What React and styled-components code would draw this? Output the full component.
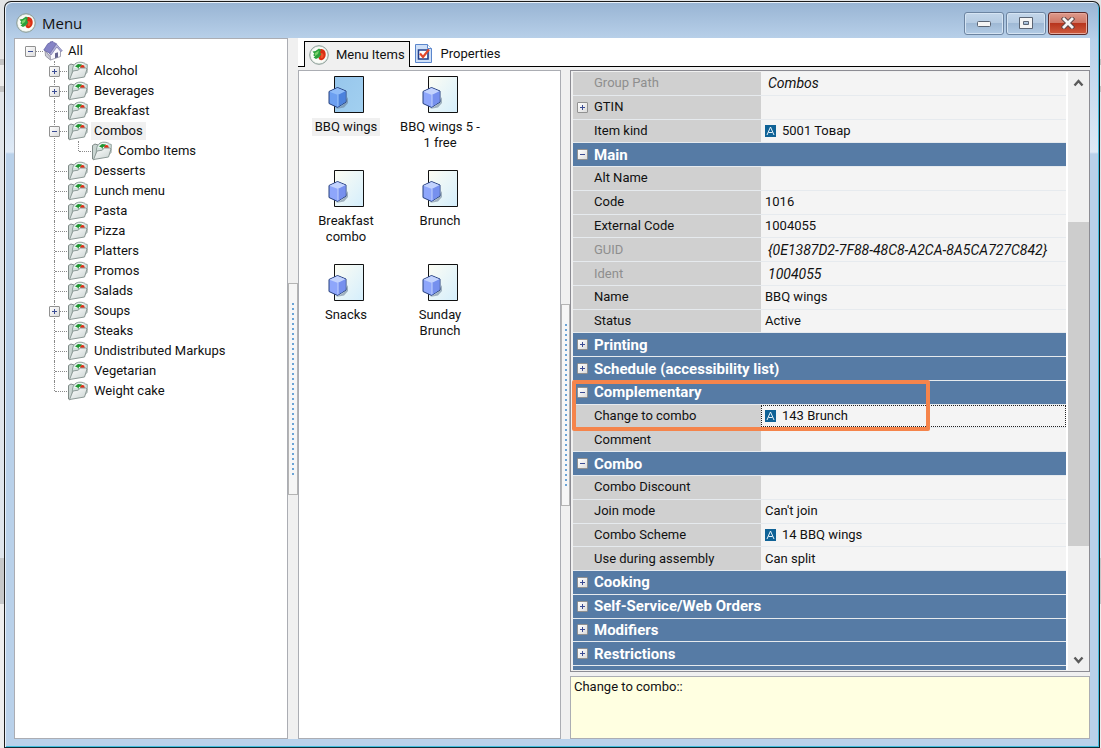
import React from 'react';
import styled, { createGlobalStyle } from 'styled-components';

const Global = createGlobalStyle`
  * { box-sizing: border-box; }
  body { margin: 0; background: #f0f0f0; font: 13px/20px Roboto, "Liberation Sans", sans-serif; color: #111; }
  button { font: inherit; color: inherit; }
`;

const Desktop = styled.div`
  min-height: 100vh;
  display: flex;
  padding: 1px 1px 0 4px;
  background: linear-gradient(
    #e2e4e6 0, #e6e6e6 59px, #c4c4c4 59px, #c4c4c4 65px, #ececec 65px, #ececec 86px,
    #c4c4c4 86px, #c4c4c4 92px, #e2e6ea 92px, #dfe5ec 558px, #c6c8ca 558px, #c6c8ca 604px, #eeeeee 604px
  );
`;
const Window = styled.main`
  flex: 1;
  display: flex;
  flex-direction: column;
  min-width: 0;
  padding: 0 9px 8px;
  border: 1px solid #1c1c1c;
  border-bottom-color: #0b2d38;
  border-radius: 7px 7px 0 0;
  background: linear-gradient(#98b4d3 0, #b9d1ea 38px, #dfeaf6 150px, #b9d1ea 152px, #b9d1ea 100%);
  box-shadow: inset 1px 1px 0 #e9f1fa, inset -1px -1px 0 #43bcdc;
`;
const TitleBar = styled.header`
  display: flex;
  align-items: center;
  gap: 6px;
  height: 36px;
  padding: 6px 2px 0 2px;
`;
const Title = styled.h1`
  flex: 1;
  margin: 0;
  font: 15px/20px "Open Sans", "Noto Sans", sans-serif;
`;
const Controls = styled.div`
  display: flex;
  gap: 2px;
`;
const Control = styled.button`
  width: 40px;
  height: 23px;
  padding: 0;
  display: grid;
  place-items: center;
  border: 1px solid ${(p) => (p.$close ? '#5c2a2a' : '#6c84a1')};
  border-radius: 3px;
  box-shadow: inset 0 0 0 1px ${(p) => (p.$close ? '#e8a99c' : '#d5e4f3')};
  background: ${(p) =>
    p.$close
      ? 'linear-gradient(#dd9a8c 0, #cf7462 50%, #b8351d 50%, #cf5c40 100%)'
      : 'linear-gradient(#c3d6ea 0, #b5cbe2 50%, #9fb9d5 50%, #b2cbe5 100%)'};
`;
const Body = styled.div`
  flex: 1;
  display: grid;
  grid-template-columns: 274px 10px minmax(0, 1fr);
  background: #f0f0f0;
`;
const Panel = styled.section`
  min-width: 0;
  background: #fff;
  border: 1px solid #abadb3;
`;
const Splitter = styled.div`
  display: flex;
  flex-direction: column;
  justify-content: center;
  background: #f0f0f0;
`;
const Grip = styled.div`
  height: ${(p) => p.$h}px;
  display: flex;
  justify-content: center;
  padding: 19px 0;
  border: 1px solid #b4b4b4;
  background: #f6f6f6;
  &::after {
    content: '';
    width: 2px;
    background: repeating-linear-gradient(#6aa3d6 0 2px, #f6f6f6 2px 5px);
  }
`;

const Tree = styled.ul`
  list-style: none;
  margin: 0;
  padding: 2px 0 0 10px;
`;
const Branch = styled.ul`
  list-style: none;
  margin: 0;
  padding: 0 0 0 24px;
`;
const Node = styled.li`
  position: relative;
  &::before {
    content: '';
    position: absolute;
    left: 5px;
    top: 0;
    bottom: 0;
    border-left: 1px dotted #8a8a8a;
  }
  &:last-child::before {
    bottom: auto;
    height: ${(p) => (p.$root ? 0 : 10)}px;
  }
`;
const NodeRow = styled.div`
  display: flex;
  align-items: center;
  height: 20px;
`;
const Joint = styled.span`
  position: relative;
  width: 18px;
  height: 20px;
  display: flex;
  align-items: center;
  &::before {
    content: '';
    position: absolute;
    left: 6px;
    right: 0;
    top: 10px;
    border-top: 1px dotted #8a8a8a;
  }
`;
const Toggle = styled.button`
  position: relative;
  flex: none;
  width: 11px;
  height: 11px;
  padding: 0;
  border: 1px solid #919191;
  border-radius: 1px;
  background: linear-gradient(135deg, #fff, #dcdcdc);
  &::before {
    content: '';
    position: absolute;
    inset: 4px 2px auto;
    border-top: 1px solid #3b4c94;
  }
  &::after {
    content: '';
    display: ${(p) => (p.$open ? 'none' : 'block')};
    position: absolute;
    inset: 2px auto 2px 4px;
    border-left: 1px solid #3b4c94;
  }
`;
const NodeLabel = styled.span`
  margin-left: 2px;
  padding: 0 3px;
  line-height: 18px;
  background: ${(p) => (p.$sel ? '#f0f0f0' : 'transparent')};
`;

const Right = styled.div`
  display: flex;
  flex-direction: column;
  min-width: 0;
`;
const Tabs = styled.nav`
  display: flex;
  align-items: flex-end;
  height: 29px;
  padding-left: 6px;
  background: #fff;
  border-bottom: 1px solid #000;
`;
const Tab = styled.button`
  display: flex;
  align-items: center;
  gap: ${(p) => (p.$active ? 7 : 9)}px;
  height: 26px;
  padding: 0 4px;
  border: 1px solid ${(p) => (p.$active ? '#000' : 'transparent')};
  border-bottom: 0;
  background: ${(p) => (p.$active ? '#f0f0f0' : 'transparent')};
  margin-bottom: ${(p) => (p.$active ? -1 : 0)}px;
`;
const Panes = styled.div`
  flex: 1;
  display: grid;
  grid-template-columns: 263px 9px minmax(0, 1fr);
  padding-top: 3px;
`;
const Tiles = styled.div`
  display: grid;
  grid-template-columns: repeat(2, 94px);
  grid-auto-rows: 94px;
`;
const Tile = styled.button`
  display: flex;
  flex-direction: column;
  align-items: center;
  gap: 4px;
  padding: 5px 0 0;
  border: 0;
  background: none;
  line-height: 16px;
`;
const TileLabel = styled.span`
  max-width: 88px;
  padding: 1px 3px;
  background: ${(p) => (p.$sel ? '#f0f0f0' : 'transparent')};
`;
const Side = styled.div`
  display: flex;
  flex-direction: column;
  gap: 4px;
  min-width: 0;
`;
const GridBox = styled.section`
  flex: 1;
  display: flex;
  min-width: 0;
  border: 1px solid #8c8c93;
  padding: 1px 0 1px 2px;
  background: #f0f0f0;
`;
const Table = styled.table`
  flex: 1;
  display: flex;
  min-width: 0;
  border-right: 2px solid #fff;
`;
const Rows = styled.tbody`
  flex: 1;
  display: flex;
  flex-direction: column;
  min-width: 0;
`;
const Row = styled.tr`
  position: relative;
  flex: 1 0 0;
  display: grid;
  grid-template-columns: ${(p) => (p.$head ? '1fr' : '188px minmax(0, 1fr)')};
  border-bottom: 1px solid #e6eaee;
`;
const Name = styled.th`
  display: flex;
  align-items: center;
  gap: 6px;
  padding: 0 0 0 ${(p) => (p.$toggle ? 4 : 21)}px;
  font-size: ${(p) => (p.$head ? 15 : 13)}px;
  font-weight: ${(p) => (p.$head ? 700 : 400)};
  color: ${(p) => (p.$head ? '#fff' : p.$dim ? '#8e8e8e' : '#111')};
  background: ${(p) => (p.$head ? '#567ba5' : '#d0d0d0')};
`;
const Value = styled.td`
  display: flex;
  align-items: center;
  gap: 6px;
  padding: 0 0 0 ${(p) => (p.$dim ? 6 : 3)}px;
  white-space: nowrap;
  font-size: ${(p) => (p.$dim ? 14 : 13)}px;
  font-style: ${(p) => (p.$dim ? 'italic' : 'normal')};
  border: 1px ${(p) => (p.$focus ? 'dotted #222' : 'solid transparent')};
  background: #f4f4f4;
`;
const NextRow = styled.tr`
  height: 4px;
  background: #567ba5;
`;
const Scroll = styled.div`
  width: 21px;
  display: flex;
  flex-direction: column;
`;
const ScrollButton = styled.button`
  height: 21px;
  padding: 0;
  border: 0;
  background: none;
  display: grid;
  place-items: center;
`;
const Track = styled.div`
  flex: 1;
  display: flex;
  flex-direction: column;
  padding: 129px 0 103px;
`;
const Thumb = styled.div`
  flex: 1;
  background: #cdcdcd;
`;
const Highlight = styled.span`
  position: absolute;
  z-index: 1;
  left: -1px;
  top: -1px;
  width: 358px;
  height: calc(200% + 6px);
  border: 4px solid #f5844b;
  border-radius: 2px;
  pointer-events: none;
`;
const Hint = styled.footer`
  height: 63px;
  padding: 0 3px;
  border: 1px solid #abadb3;
  background: #ffffe1;
`;

const AppIcon = () => (
  <svg width="20" height="20" viewBox="0 0 20 20">
    <circle cx="10" cy="10" r="9.300" fill="#e6ece6" stroke="#8a9c96" />
    <circle cx="10" cy="10" r="8" fill="#fafcf8" />
    <path d="M10 5c1-1.500 4-1 5.500.5 2 2.500 1.500 7-1 8.800-2 1.500-4 1-4.800-.8-.5-1.500 1-2 1.500-3.500z" fill="#d92f14" />
    <path d="M12 8c1.500-.5 3 1 2.500 3s-1.500 2.500-2.500 2 .5-2 0-5z" fill="#f0532a" />
    <path d="M3.500 6.500l3-.5 3.500-2.500 2 1.500-1 2 1 2.500-2 3-3 1.500-2.500-1.500 1.500-1-2-1.500 1.500-1z" fill="#2ba03c" />
    <path d="M6 8l4-2.500-1 3.500-3 2z" fill="#7bd26a" />
  </svg>
);
const FolderIcon = () => (
  <svg width="22" height="20" viewBox="0 0 22 20">
    <defs>
      <linearGradient id="flap" x1="0" y1="0" x2="1" y2="1">
        <stop offset="0" stopColor="#ffffff" />
        <stop offset="1" stopColor="#c9d3d1" />
      </linearGradient>
    </defs>
    <path d="M1.500 4.500L4 3l3 1v6l-4 9-1.500-1z" fill="#cbd6d3" stroke="#7f8a87" />
    <path d="M5.500 8C6 3.500 9 1.200 13 1.200c3 0 4.800.8 5.500 1.800l1.800.5-.3 8-3 3H5z" fill="#d3e2de" stroke="#93a29e" />
    <path d="M7 7c.5-3 3-5 6-5s5 2 5 5z" fill="#eef6f3" />
    <path d="M8 5.500L11 3l4 .5-1 2-2 .5-.5 2-1-1.500z" fill="#1f9632" />
    <circle cx="15.500" cy="6.200" r="2.200" fill="#dd2f16" />
    <path d="M2.500 18.500L6 10l5-.8L13.500 7h5.300l1.200 1-2.500 8z" fill="url(#flap)" stroke="#8d9a97" />
  </svg>
);
const HomeIcon = () => (
  <svg width="20" height="20" viewBox="0 0 20 20">
    <path d="M2 9.500L7.500 16v3L2.500 15z" fill="#c9c9d6" stroke="#9a9aa8" />
    <path d="M7.500 19l10-3.500v-6L13 5l-6 7z" fill="#f7f7fc" stroke="#a3a3b4" />
    <path d="M.8 9L5 2.500l2-.3V1l3-.5 1 1.200 2.500 1L7 12.500z" fill="#8583c6" stroke="#6563a5" strokeWidth=".8" />
    <path d="M7 12.500L13.300 3l6 6.800-1.500.7-4-4.500L8 14z" fill="#b4b3dc" stroke="#7473a8" strokeWidth=".7" />
    <path d="M12 17.300v-5l3-1v5z" fill="#65648f" />
  </svg>
);
const PageIcon = () => (
  <svg width="17" height="19" viewBox="0 0 17 19">
    <path d="M.5.5h12l4 4v14H.5z" fill="#cfe0f8" stroke="#5b86cc" />
    <path d="M12.500.5v4h4" fill="#fff" stroke="#5b86cc" />
    <path d="M3.500 6h9.500v9H3.500z" fill="#fff" stroke="#23408c" strokeWidth="1.600" />
    <path d="M5 9.500l3 3.500 6-7.500" fill="none" stroke="#e4482b" strokeWidth="2.200" />
  </svg>
);
const ItemIcon = ({ sel }) => (
  <svg width="36" height="38" viewBox="0 0 36 38">
    <defs>
      <linearGradient id={sel ? 'gs' : 'gn'} x1="0" y1="0" x2="1" y2="1">
        <stop offset="0" stopColor={sel ? '#97c6ec' : '#fdfdf4'} />
        <stop offset="1" stopColor={sel ? '#a2d0f0' : '#d4eefc'} />
      </linearGradient>
    </defs>
    <path d="M6.500.5h29v36h-29z" fill={`url(#${sel ? 'gs' : 'gn'})`} stroke="#111" />
    <path d="M8 33l8-1.500 4-4.500v-6l-5 8z" fill="#64788f" opacity=".55" />
    <path d="M1 15.500l8.500-4 8.500 3.500v11l-8.500 5.500-8.500-4z" fill={sel ? '#6c9ff0' : '#8ea6fb'} stroke="#26407e" />
    <path d="M1.500 15.800l8-3.800 8 3.300-7.500 3.700z" fill={sel ? '#8fbcf8' : '#c3d3fd'} />
    <path d="M10 19l7.500-3.700v10.400L10 30.700z" fill={sel ? '#4c82dd' : '#7690ee'} />
    <path d="M10 19v11" stroke={sel ? '#9cc6fa' : '#c3d3fd'} />
  </svg>
);
const RefIcon = () => (
  <svg width="11" height="12" viewBox="0 0 11 12">
    <path d="M0 0h11v12H0z" fill="#0f6296" />
    <path d="M2 10l3.500-8 3.500 8M3.500 7.500h4" fill="none" stroke="#e8f3fa" />
  </svg>
);
const Chevron = ({ down }) => (
  <svg width="11" height="8" viewBox="0 0 11 8">
    <path d={down ? 'M1.500 1.500l4 4.500 4-4.500' : 'M1.500 6.500l4-4.500 4 4.500'} fill="none" stroke="#5a5a5a" strokeWidth="2.400" />
  </svg>
);

const categories = [
  ['Alcohol', 'closed'], ['Beverages', 'closed'], ['Breakfast'],
  ['Combos', 'open', ['Combo Items']],
  ['Desserts'], ['Lunch menu'], ['Pasta'], ['Pizza'], ['Platters'], ['Promos'],
  ['Salads'], ['Soups', 'closed'], ['Steaks'], ['Undistributed Markups'],
  ['Vegetarian'], ['Weight cake'],
];
const items = ['BBQ wings', 'BBQ wings 5 - 1 free', 'Breakfast combo', 'Brunch', 'Snacks', 'Sunday Brunch'];
const props = [
  { n: 'Group Path', v: 'Combos', dim: true },
  { n: 'GTIN', toggle: true },
  { n: 'Item kind', v: '5001 Товар', link: true },
  { n: 'Main', head: true, open: true },
  { n: 'Alt Name' },
  { n: 'Code', v: '1016' },
  { n: 'External Code', v: '1004055' },
  { n: 'GUID', v: '{0E1387D2-7F88-48C8-A2CA-8A5CA727C842}', dim: true },
  { n: 'Ident', v: '1004055', dim: true },
  { n: 'Name', v: 'BBQ wings' },
  { n: 'Status', v: 'Active' },
  { n: 'Printing', head: true },
  { n: 'Schedule (accessibility list)', head: true },
  { n: 'Complementary', head: true, open: true, marked: true },
  { n: 'Change to combo', v: '143 Brunch', link: true, focus: true },
  { n: 'Comment' },
  { n: 'Combo', head: true, open: true },
  { n: 'Combo Discount' },
  { n: 'Join mode', v: "Can't join" },
  { n: 'Combo Scheme', v: '14 BBQ wings', link: true },
  { n: 'Use during assembly', v: 'Can split' },
  { n: 'Cooking', head: true },
  { n: 'Self-Service/Web Orders', head: true },
  { n: 'Modifiers', head: true },
  { n: 'Restrictions', head: true },
];

function TreeNode({ name, state, children }) {
  return (
    <Node>
      <NodeRow>
        <Joint>{state && <Toggle $open={state === 'open'} aria-label={`Toggle ${name}`} />}</Joint>
        <FolderIcon />
        <NodeLabel $sel={name === 'Combos'}>{name}</NodeLabel>
      </NodeRow>
      {children && (
        <Branch>
          {children.map((c) => <TreeNode key={c} name={c} />)}
        </Branch>
      )}
    </Node>
  );
}

export default function App() {
  return (
    <Desktop>
      <Global />
      <Window>
        <TitleBar>
          <AppIcon />
          <Title>Menu</Title>
          <Controls>
            <Control aria-label="Minimize">
              <svg width="14" height="7" viewBox="0 0 14 7"><rect x=".5" y="1.500" width="13" height="5" rx="1" fill="#f5f5f5" stroke="#5b6574" /></svg>
            </Control>
            <Control aria-label="Maximize">
              <svg width="14" height="12" viewBox="0 0 14 12"><path fillRule="evenodd" d="M.5.5h13v11H.5zM4.500 4.500v3h5v-3z" fill="#f5f5f5" stroke="#5b6574" /></svg>
            </Control>
            <Control $close aria-label="Close">
              <svg width="14" height="12" viewBox="0 0 14 12">
                <path d="M3 2l8 8M11 2l-8 8" fill="none" stroke="#5f4646" strokeWidth="4.600" strokeLinecap="square" />
                <path d="M3 2l8 8M11 2l-8 8" fill="none" stroke="#f5f5f5" strokeWidth="2.800" strokeLinecap="square" />
              </svg>
            </Control>
          </Controls>
        </TitleBar>
        <Body>
          <Panel>
            <Tree>
              <Node $root>
                <NodeRow>
                  <Joint><Toggle $open aria-label="Toggle All" /></Joint>
                  <HomeIcon />
                  <NodeLabel>All</NodeLabel>
                </NodeRow>
                <Branch>
                  {categories.map(([name, state, kids]) => (
                    <TreeNode key={name} name={name} state={state}>{kids}</TreeNode>
                  ))}
                </Branch>
              </Node>
            </Tree>
          </Panel>
          <Splitter><Grip $h={212} /></Splitter>
          <Right>
            <Tabs>
              <Tab $active><AppIcon /> Menu Items</Tab>
              <Tab><PageIcon /> Properties</Tab>
            </Tabs>
            <Panes>
              <Panel>
                <Tiles>
                  {items.map((name, i) => (
                    <Tile key={name}>
                      <ItemIcon sel={i === 0} />
                      <TileLabel $sel={i === 0}>{name}</TileLabel>
                    </Tile>
                  ))}
                </Tiles>
              </Panel>
              <Splitter><Grip $h={202} /></Splitter>
              <Side>
                <GridBox>
                  <Table>
                    <Rows>
                      {props.map((p) => (
                        <Row key={p.n} $head={p.head}>
                          <Name scope="row" $head={p.head} $dim={p.dim} $toggle={p.head || p.toggle}>
                            {(p.head || p.toggle) && <Toggle $open={p.open} aria-label={`Toggle ${p.n}`} />}
                            {p.n}
                            {p.marked && <Highlight />}
                          </Name>
                          {!p.head && (
                            <Value $dim={p.dim} $focus={p.focus}>
                              {p.link && <RefIcon />}
                              {p.v}
                            </Value>
                          )}
                        </Row>
                      ))}
                      <NextRow />
                    </Rows>
                  </Table>
                  <Scroll>
                    <ScrollButton aria-label="Scroll up"><Chevron /></ScrollButton>
                    <Track><Thumb /></Track>
                    <ScrollButton aria-label="Scroll down"><Chevron down /></ScrollButton>
                  </Scroll>
                </GridBox>
                <Hint>Change to combo::</Hint>
              </Side>
            </Panes>
          </Right>
        </Body>
      </Window>
    </Desktop>
  );
}
